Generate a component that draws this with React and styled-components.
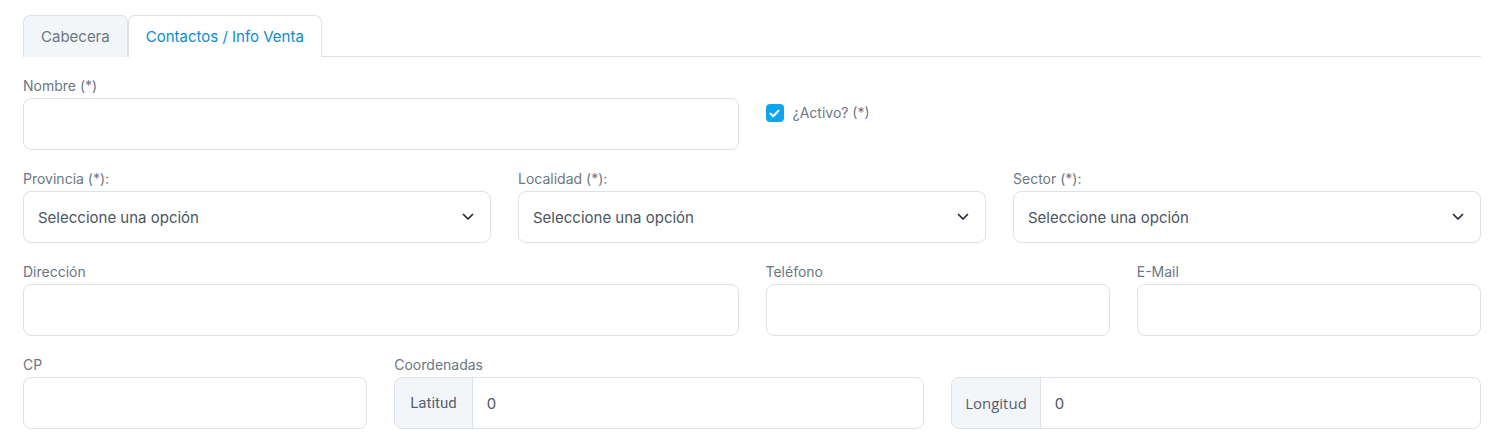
import React from "react";
import styled, { createGlobalStyle } from "styled-components";

const colors = {
  text: "#4b5563",
  label: "#6b7785",
  border: "#dce1e7",
  soft: "#f3f6f9",
  blue: "#0b8bd0",
  check: "#0ea5ee",
};

const GlobalStyle = createGlobalStyle`
  body {
    margin: 0;
    background: #fff;
    font-family: Inter, "Liberation Sans", sans-serif;
    color: ${colors.text};
  }
  * { box-sizing: border-box; }
`;

const Page = styled.div`
  padding: 15px 12px 0 23px;
`;

const TabBar = styled.div`
  display: flex;
  border-bottom: 1px solid ${colors.border};
  margin-bottom: 19px;
`;

const Tab = styled.div`
  height: 42px;
  padding: 0 17px;
  display: flex;
  align-items: center;
  font-size: 15px;
  border: 1px solid ${colors.border};
  border-bottom: none;
  border-radius: 7px 7px 0 0;
  margin-bottom: -1px;
  background: ${(p) => (p.active ? "#fff" : colors.soft)};
  color: ${(p) => (p.active ? colors.blue : colors.label)};
`;

const Row = styled.div`
  display: grid;
  grid-template-columns: repeat(12, 1fr);
  column-gap: 27px;
  margin-bottom: 19px;
`;

const Field = styled.div`
  grid-column: ${(p) => (p.span ? `span ${p.span}` : "auto")};
  display: flex;
  flex-direction: column;
  min-width: 0;
`;

const Nested = styled.div`
  grid-column: span ${(p) => p.span};
  display: grid;
  grid-template-columns: 1fr 1fr;
  column-gap: 27px;
`;

const Label = styled.label`
  font-size: 14px;
  line-height: 19px;
  height: 20px;
  margin-bottom: 2px;
  color: ${colors.label};
`;

const Input = styled.input`
  height: 52px;
  width: 100%;
  border: 1px solid ${colors.border};
  border-radius: 8px;
  padding: 0 14px;
  font: inherit;
  font-size: 15px;
  color: ${colors.text};
  background: #fff;
  outline: none;
`;

const SelectBox = styled.div`
  height: 52px;
  border: 1px solid ${colors.border};
  border-radius: 8px;
  padding: 0 16px 0 14px;
  display: flex;
  align-items: center;
  justify-content: space-between;
  font-size: 15px;
  color: ${colors.text};
`;

const CheckWrap = styled.div`
  grid-column: span 6;
  padding-top: 28px;
  display: flex;
  align-items: flex-start;
  gap: 9px;
  font-size: 14px;
  color: ${colors.label};
`;

const CheckBox = styled.span`
  width: 18px;
  height: 18px;
  border-radius: 4px;
  background: ${colors.check};
  display: inline-flex;
  align-items: center;
  justify-content: center;
  flex: none;
`;

const CheckText = styled.span`
  line-height: 18px;
`;

const Group = styled.div`
  height: 52px;
  display: flex;
  border: 1px solid ${colors.border};
  border-radius: 8px;
  overflow: hidden;
`;

const Addon = styled.span`
  display: flex;
  align-items: center;
  padding: 0 ${(p) => p.pad || 14}px;
  background: ${colors.soft};
  border-right: 1px solid ${colors.border};
  font-family: ${(p) => p.font || "Roboto, sans-serif"};
  font-size: 15px;
  color: #555f6d;
`;

const GroupValue = styled.span`
  flex: 1;
  display: flex;
  align-items: center;
  padding: 0 14px;
  font-size: 15px;
  color: ${colors.text};
`;

const Chevron = () => (
  <svg width="12" height="8" viewBox="0 0 12 8" fill="none">
    <path d="M1.5 1.5 6 6l4.5-4.5" stroke="#1f2937" strokeWidth="1.7" strokeLinecap="round" strokeLinejoin="round" />
  </svg>
);

const Select = ({ label }) => (
  <Field span={4}>
    <Label>{label}</Label>
    <SelectBox>
      <span>Seleccione una opción</span>
      <Chevron />
    </SelectBox>
  </Field>
);

export default function App() {
  return (
    <Page>
      <GlobalStyle />
      <TabBar>
        <Tab>Cabecera</Tab>
        <Tab active>Contactos / Info Venta</Tab>
      </TabBar>

      <Row>
        <Field span={6}>
          <Label>Nombre (*)</Label>
          <Input />
        </Field>
        <CheckWrap>
          <CheckBox>
            <svg width="11" height="9" viewBox="0 0 11 9" fill="none">
              <path d="M1.5 4.6 4.2 7.2 9.5 1.8" stroke="#fff" strokeWidth="2" strokeLinecap="round" strokeLinejoin="round" />
            </svg>
          </CheckBox>
          <CheckText>¿Activo? (*)</CheckText>
        </CheckWrap>
      </Row>

      <Row>
        <Select label="Provincia (*):" />
        <Select label="Localidad (*):" />
        <Select label="Sector (*):" />
      </Row>

      <Row>
        <Field span={6}>
          <Label>Dirección</Label>
          <Input />
        </Field>
        <Field span={3}>
          <Label>Teléfono</Label>
          <Input />
        </Field>
        <Field span={3}>
          <Label>E-Mail</Label>
          <Input />
        </Field>
      </Row>

      <Row>
        <Field span={3}>
          <Label>CP</Label>
          <Input />
        </Field>
        <Nested span={9}>
          <Field>
            <Label>Coordenadas</Label>
            <Group>
              <Addon pad={15}>Latitud</Addon>
              <GroupValue>0</GroupValue>
            </Group>
          </Field>
          <Field>
            <Label />
            <Group>
              <Addon pad={13} font={'"Open Sans", sans-serif'}>Longitud</Addon>
              <GroupValue>0</GroupValue>
            </Group>
          </Field>
        </Nested>
      </Row>
    </Page>
  );
}
